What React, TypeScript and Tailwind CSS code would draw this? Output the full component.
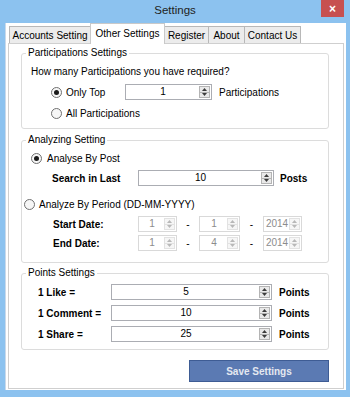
import React from 'react';

const Arrow = ({ up, color }: { up?: boolean; color: string }) => (
  <svg width="5" height="3" viewBox="0 0 5 3">
    <path d={up ? 'M0 3L2.5 0L5 3Z' : 'M0 0L2.5 3L5 0Z'} fill={color} />
  </svg>
);

function Spinner({ disabled }: { disabled?: boolean }) {
  const c = disabled ? '#b8b8b8' : '#3c3c3c';
  return (
    <div
      className={`flex w-[11px] flex-col border ${
        disabled ? 'border-[#e2e2e2] bg-[#f6f6f6]' : 'border-[#b4b4b4] bg-[#e9e9e9]'
      }`}
    >
      <div className={`flex flex-1 items-center justify-center border-b ${disabled ? 'border-[#e2e2e2]' : 'border-[#b4b4b4]'}`}>
        <Arrow up color={c} />
      </div>
      <div className="flex flex-1 items-center justify-center">
        <Arrow color={c} />
      </div>
    </div>
  );
}

function NumBox({ value, width, disabled }: { value: string; width: string; disabled?: boolean }) {
  return (
    <div
      className={`flex h-[16px] border bg-white p-px ${width} ${
        disabled ? 'border-[#d9d9d9] text-[#8c8c8c]' : 'border-[#abadb3] text-black'
      }`}
    >
      <div className="flex-1 text-center leading-[12px]">{value}</div>
      <Spinner disabled={disabled} />
    </div>
  );
}

function Radio({ checked }: { checked?: boolean }) {
  return (
    <span className="flex h-[11px] w-[11px] shrink-0 items-center justify-center rounded-full border border-[#707070] bg-[#f6f6f6]">
      {checked && <span className="h-[5px] w-[5px] rounded-full bg-[#1a1a1a]" />}
    </span>
  );
}

function Group({ title, children }: { title: string; children: React.ReactNode }) {
  return (
    <fieldset className="w-[308px] rounded-[3px] border border-[#dcdcdc]">
      <legend className="ml-[4px] px-[2px] leading-[12px]">{title}</legend>
      {children}
    </fieldset>
  );
}

const tabs = [
  { label: 'Accounts Setting', w: 'w-[82px]' },
  { label: 'Other Settings', w: 'w-[75px]', active: true },
  { label: 'Register', w: 'w-[45px]' },
  { label: 'About', w: 'w-[37px]' },
  { label: 'Contact Us', w: 'w-[57px]' },
];

export default function App() {
  return (
    <div className="flex h-[397px] w-[350px] flex-col bg-[#8cc2ef] font-['Liberation_Sans',Arial,sans-serif] text-[10px] text-black">
      {/* Title bar */}
      <div className="relative flex h-[23px] shrink-0 items-center justify-center pb-[1px] text-[11.5px] text-[#222]">
        Settings
        <div className="absolute right-[6px] top-0 flex h-[17px] w-[23px] items-center justify-center bg-[#c75050] text-[12px] font-bold leading-none text-white">
          ×
        </div>
      </div>

      {/* Client area */}
      <div className="ml-[5px] mr-[4px] flex h-[367px] flex-col border-l border-[#c9d9ea] bg-white">
        {/* Tabs */}
        <div className="flex h-[20px] items-end pl-[3px]">
          {tabs.map((t) =>
            t.active ? (
              <div
                key={t.label}
                className={`relative z-10 -mb-px -ml-px flex h-[21px] items-center justify-center border border-b-0 border-[#c9c9c9] bg-white pb-[2px] ${t.w}`}
              >
                {t.label}
              </div>
            ) : (
              <div
                key={t.label}
                className={`-ml-px flex h-[17px] items-center justify-center border border-b-0 border-[#b8b8b8] bg-[#ececec] first:ml-0 ${t.w}`}
              >
                {t.label}
              </div>
            )
          )}
        </div>

        {/* Panel */}
        <div className="mx-[2px] h-[346px] border border-[#cfcfcf] pl-[12px] pt-[3px]">
          <Group title="Participations Settings">
            <div className="pb-[9px] pt-[7px]">
              <div className="pl-[9px] leading-[12px]">How many Participations you have required?</div>
              <div className="mt-[6px] flex h-[16px] items-center pl-[29px]">
                <Radio checked />
                <span className="ml-[4px] w-[59px]">Only Top</span>
                <NumBox value="1" width="w-[87px]" />
                <span className="ml-[7px]">Participations</span>
              </div>
              <div className="mt-[7px] flex h-[12px] items-center pl-[29px]">
                <Radio />
                <span className="ml-[4px]">All Participations</span>
              </div>
            </div>
          </Group>

          <div className="mt-[5px]">
            <Group title="Analyzing Setting">
              <div className="pb-[11px] pt-[6px]">
                <div className="flex h-[12px] items-center pl-[9px]">
                  <Radio checked />
                  <span className="ml-[5px]">Analyse By Post</span>
                </div>
                <div className="mt-[6px] flex h-[16px] items-center pl-[30px]">
                  <span className="w-[86px] font-bold">Search in Last</span>
                  <NumBox value="10" width="w-[136px]" />
                  <span className="ml-[6px] font-bold">Posts</span>
                </div>
                <div className="mt-[12px] flex h-[12px] items-center pl-[2px]">
                  <Radio />
                  <span className="ml-[4px]">Analyze By Period (DD-MM-YYYY)</span>
                </div>
                {[
                  { label: 'Start Date:', d: '1', m: '1' },
                  { label: 'End Date:', d: '1', m: '4' },
                ].map((r, i) => (
                  <div key={r.label} className={`flex h-[16px] items-center pl-[31px] ${i === 0 ? 'mt-[6px]' : 'mt-[3px]'}`}>
                    <span className="w-[85px] font-bold">{r.label}</span>
                    <NumBox value={r.d} width="w-[39px]" disabled />
                    <span className="w-[22px] text-center">-</span>
                    <NumBox value={r.m} width="w-[41px]" disabled />
                    <span className="w-[23px] text-center">-</span>
                    <NumBox value="2014" width="w-[39px]" disabled />
                  </div>
                ))}
              </div>
            </Group>
          </div>

          <div className="mt-[4px]">
            <Group title="Points Settings">
              <div className="flex flex-col gap-[5px] pb-[7px] pt-[5px]">
                {[
                  { label: '1 Like =', v: '5' },
                  { label: '1 Comment =', v: '10' },
                  { label: '1 Share =', v: '25' },
                ].map((r) => (
                  <div key={r.label} className="flex h-[16px] items-center pl-[16px]">
                    <span className="w-[73px] font-bold">{r.label}</span>
                    <NumBox value={r.v} width="w-[161px]" />
                    <span className="ml-[7px] font-bold">Points</span>
                  </div>
                ))}
              </div>
            </Group>
          </div>

          <div className="mt-[10px] flex w-[308px] justify-end">
            <button className="h-[22px] w-[140px] border border-[#3e5c94] bg-[#5b7ab3] text-[10px] font-bold text-[#e4e8f0]">
              Save Settings
            </button>
          </div>
        </div>
      </div>
    </div>
  );
}
